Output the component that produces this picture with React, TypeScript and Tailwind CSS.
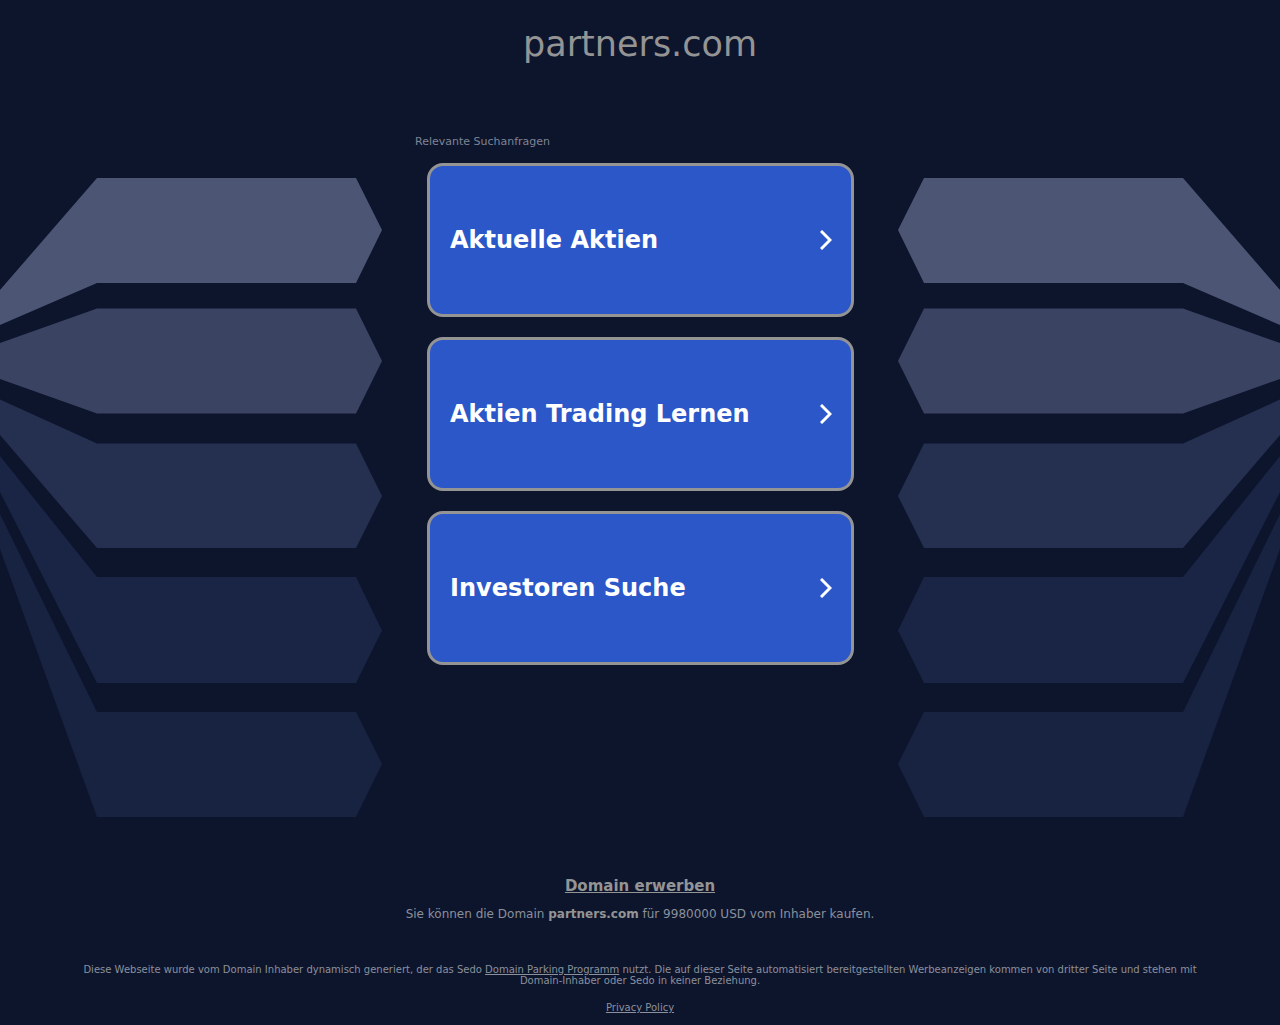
interface Band {
  points: string;
  fill: string;
}

const KEYWORDS = ['Aktuelle Aktien', 'Aktien Trading Lernen', 'Investoren Suche'];

const BANDS: Band[] = [
  { points: '0,112 97,0 356,0 382,52 356,105 97,105 0,147', fill: '#4c5674' },
  { points: '0,165 97,130.5 356,130.5 382,183 356,235.5 97,235.5 0,201', fill: '#3a4362' },
  { points: '0,221.5 97,265.5 356,265.5 382,318 356,370 97,370 0,257', fill: '#252f4f' },
  { points: '0,278 97,399 356,399 382,452.5 356,505 97,505 0,314', fill: '#1a2444' },
  { points: '0,336 97,534 356,534 382,586 356,639 97,639 0,371', fill: '#182241' },
];

function Bands({ mirrored = false }: { mirrored?: boolean }) {
  return (
    <svg
      viewBox="0 0 383 640"
      aria-hidden="true"
      className={`mt-[50px] w-full ${mirrored ? '-scale-x-100' : ''}`}
    >
      {BANDS.map(band => (
        <polygon key={band.points} points={band.points} fill={band.fill} />
      ))}
    </svg>
  );
}

function Arrow() {
  return (
    <svg viewBox="0 0 12 20" aria-hidden="true" className="h-5 w-3 shrink-0" fill="none" stroke="currentColor" strokeWidth={3}>
      <path d="M1 1l9 9-9 9" />
    </svg>
  );
}

export default function App() {
  return (
    <div className="min-h-screen bg-[#0d152d] text-[#8b909b] font-['DejaVu_Sans',sans-serif]">
      <header className="pt-5 text-center">
        <h1 className="text-[35px] leading-12 text-[#949494]">partners.com</h1>
      </header>

      <main className="mt-15 grid grid-cols-[1fr_450px_1fr] gap-x-8">
        <Bands />

        {/* Related searches */}
        <section>
          <h2 className="pt-[7px] text-[11px] leading-[13px] text-[#7e8493]">Relevante Suchanfragen</h2>
          <ul className="mt-[15px] space-y-5 pr-[11px] pl-3">
            {KEYWORDS.map(keyword => (
              <li key={keyword}>
                <a
                  href="#"
                  className="flex h-[154px] items-center justify-between rounded-2xl border-3 border-[#949494] bg-[#2b57c8] pr-[19px] pl-5 text-2xl font-bold text-white"
                >
                  {keyword}
                  <Arrow />
                </a>
              </li>
            ))}
          </ul>
        </section>

        <Bands mirrored />
      </main>

      {/* Buy box */}
      <section className="mt-[58px] text-center">
        <a href="#" className="block text-[15px] leading-5 font-bold text-[#949494] underline">
          Domain erwerben
        </a>
        <p className="mt-2 text-xs leading-5">
          Sie können die Domain <strong className="text-[#949494]">partners.com</strong> für 9980000 USD vom Inhaber kaufen.
        </p>
      </section>

      <footer className="mt-10 px-20 text-center text-[10px] leading-[11px]">
        <p>
          Diese Webseite wurde vom Domain Inhaber dynamisch generiert, der das Sedo{' '}
          <a href="#" className="underline">Domain Parking Programm</a> nutzt. Die auf dieser Seite
          automatisiert bereitgestellten Werbeanzeigen kommen von dritter Seite und stehen mit
          Domain-Inhaber oder Sedo in keiner Beziehung.
        </p>
        <a href="#" className="mt-4 inline-block underline">Privacy Policy</a>
      </footer>
    </div>
  );
}
